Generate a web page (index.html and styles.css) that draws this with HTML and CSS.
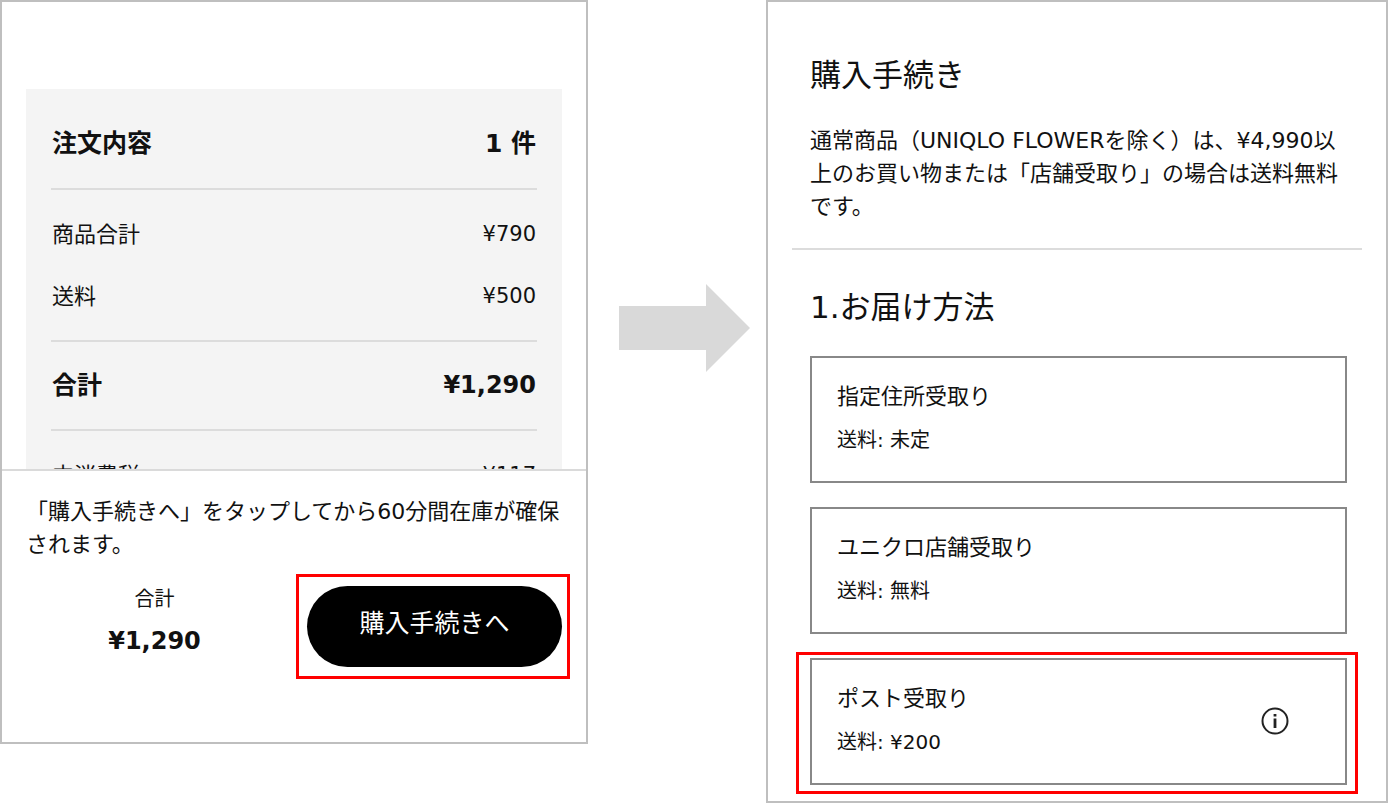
FILE: index.html
```html
<!DOCTYPE html>
<html lang="ja">
<head>
    <meta charset="UTF-8">
    <meta name="viewport" content="width=device-width, initial-scale=1.0">
    <title>購入手続き</title>
    <link rel="stylesheet" href="styles.css">
</head>
<body>
    <main class="steps">
        <!-- Cart -->
        <section class="screen cart">
            <div class="cart-scroll">
                <dl class="summary">
                    <div class="row row-head">
                        <dt>注文内容</dt>
                        <dd>1 件</dd>
                    </div>
                    <div class="row-group">
                        <div class="row">
                            <dt>商品合計</dt>
                            <dd>¥790</dd>
                        </div>
                        <div class="row">
                            <dt>送料</dt>
                            <dd>¥500</dd>
                        </div>
                    </div>
                    <div class="row row-total">
                        <dt>合計</dt>
                        <dd class="price">¥1,290</dd>
                    </div>
                    <div class="row-group">
                        <div class="row">
                            <dt>内消費税</dt>
                            <dd>¥117</dd>
                        </div>
                    </div>
                </dl>
            </div>
            <div class="cart-footer">
                <p class="note">「購入手続きへ」をタップしてから60分間在庫が確保されます。</p>
                <div class="checkout">
                    <div class="checkout-total">
                        <span class="small">合計</span>
                        <strong class="price">¥1,290</strong>
                    </div>
                    <div class="highlight highlight-button">
                        <button type="button" class="checkout-button">購入手続きへ</button>
                    </div>
                </div>
            </div>
        </section>

        <div class="arrow">
            <svg width="131" height="88" viewBox="0 0 131 88" aria-hidden="true">
                <path d="M0 22H87V0L131 44L87 88V66H0Z" fill="#d9d9d9"/>
            </svg>
        </div>

        <!-- Delivery method -->
        <section class="screen delivery">
            <header class="delivery-header">
                <h1>購入手続き</h1>
                <p>通常商品（UNIQLO FLOWERを除く）は、¥4,990以上のお買い物または「店舗受取り」の場合は送料無料です。</p>
            </header>
            <h2>1.お届け方法</h2>
            <div class="options">
                <button type="button" class="option">
                    <span class="option-text">
                        <span>指定住所受取り</span>
                        <span class="small">送料: 未定</span>
                    </span>
                </button>
                <button type="button" class="option">
                    <span class="option-text">
                        <span>ユニクロ店舗受取り</span>
                        <span class="small">送料: 無料</span>
                    </span>
                </button>
                <div class="highlight highlight-option">
                    <button type="button" class="option">
                        <span class="option-text">
                            <span>ポスト受取り</span>
                            <span class="small">送料: ¥200</span>
                        </span>
                        <svg class="info" width="28" height="28" viewBox="0 0 28 28" aria-hidden="true">
                            <circle cx="14" cy="14" r="12.5" fill="none" stroke="#222" stroke-width="2"/>
                            <path d="M14 7V9.5M14 11.5V21" stroke="#222" stroke-width="2.8"/>
                        </svg>
                    </button>
                </div>
            </div>
        </section>
    </main>
</body>
</html>
```
FILE: styles.css
```css
* {
    box-sizing: border-box;
}
body {
    margin: 0;
    background-color: #fff;
    color: #111;
    font-family: "DejaVu Sans", "Noto Sans CJK JP", sans-serif;
    font-size: 22px;
    line-height: 33px;
}
h1, h2, p, dl, dd {
    margin: 0;
}
h1, h2 {
    font-size: 31px;
    font-weight: normal;
    line-height: 40px;
}
button {
    font: inherit;
    color: inherit;
    cursor: pointer;
}
.small {
    font-size: 20px;
}
.price {
    font-size: 24px;
}
.steps {
    display: grid;
    grid-template-columns: 588fr 178fr 622fr;
    align-items: start;
}
.screen {
    border: 2px solid #bfbfbf;
}

/* Cart */
.cart-scroll {
    height: 467px;
    padding: 87px 24px 0;
    overflow: hidden;
}
.summary {
    padding: 0 25px;
    background-color: #f4f4f4;
}
.row {
    display: flex;
    justify-content: space-between;
    align-items: center;
    height: 62px;
    padding: 0 1px;
}
.row-group {
    padding: 13px 0;
}
.row-group dd {
    font-size: 21px;
}
.row-head, .row-total {
    border-bottom: 2px solid #dcdcdc;
    font-size: 25px;
    font-weight: bold;
}
.row-head {
    height: 101px;
    padding-top: 9px;
}
.row-total {
    height: 91px;
    border-top: 2px solid #dcdcdc;
}
.cart-footer {
    padding: 24px 24px 75px;
    border-top: 2px solid #dadada;
}
.checkout {
    display: flex;
    margin-top: 25px;
}
.checkout-total {
    flex: 1;
    display: flex;
    flex-direction: column;
    align-items: center;
    padding-right: 24px;
    line-height: 42px;
    margin-top: -8px;
}
.checkout-button {
    display: block;
    width: 255px;
    height: 81px;
    padding: 0 0 6px;
    border: none;
    border-radius: 41px;
    background-color: #000;
    color: #fff;
    font-size: 25px;
}

/* Red callout frames */
.highlight {
    position: relative;
}
.highlight::after {
    content: "";
    position: absolute;
    border: 3px solid #f00;
    pointer-events: none;
}
.highlight-button::after {
    inset: -12px -8px -12px -11px;
}
.highlight-option::after {
    inset: -6px -11px -9px -14px;
}

.arrow {
    display: flex;
    justify-content: center;
    padding-top: 284px;
    padding-left: 15px;
}

/* Delivery method */
.delivery {
    padding: 53px 24px 16px;
}
.delivery-header {
    padding: 0 18px 25px 18px;
    border-bottom: 2px solid #dcdcdc;
}
.delivery-header p {
    margin-top: 29px;
}
.delivery h2 {
    margin: 37px 18px 29px;
}
.options {
    display: flex;
    flex-direction: column;
    gap: 24px;
    padding: 0 15px 0 18px;
}
.option {
    display: flex;
    justify-content: space-between;
    align-items: center;
    width: 100%;
    height: 127px;
    padding: 0 56px 2px 25px;
    border: 2px solid #888;
    background-color: #fff;
    text-align: left;
}
.option-text {
    display: flex;
    flex-direction: column;
    gap: 11px;
}
.info {
    flex: none;
}
```
